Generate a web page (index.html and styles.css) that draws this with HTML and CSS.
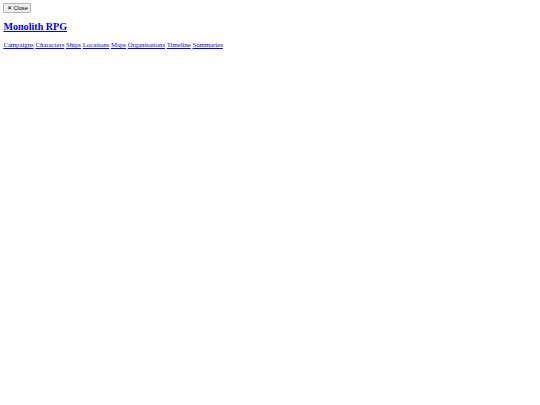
FILE: index.html
```html
<!DOCTYPE html>
<html>
<head>
<meta charset="utf-8">
<link rel="stylesheet" href="styles.css">
</head>
<body class="page">
<button class="close-btn">✕ Close</button>
<h2 class="site-title"><a href="#">Monolith RPG</a></h2>
<nav class="main-nav">
<a href="#">Campaigns</a>
<a href="#">Characters</a>
<a href="#">Ships</a>
<a href="#">Locations</a>
<a href="#">Maps</a>
<a href="#">Organisations</a>
<a href="#">Timeline</a>
<a href="#">Summaries</a>
</nav>
</body>
</html>
```
FILE: styles.css
```css
html {
  background: #ffffff;
}
.page {
  margin: 3.375px;
  font-family: "Liberation Serif", "Times New Roman", serif;
  font-size: 6.75px;
  color: #000000;
}
.close-btn {
  font-family: "Liberation Sans", Arial, sans-serif;
  font-size: 5.625px;
  line-height: 1.15;
  padding: 0.5px 2.5px;
  margin: 0;
  border: 1px solid #b4b4b4;
  border-radius: 1px;
  background: #efefef;
  color: #000000;
}
.site-title {
  font-size: 10.125px;
  font-weight: bold;
  margin: 8.4px 0;
}
.page a {
  color: #0000ee;
  text-decoration: underline;
}
.main-nav {
  display: block;
  font-size: 6.75px;
  line-height: 8px;
}
.main-nav a {
  text-decoration-thickness: 1px;
  text-underline-offset: 1px;
  text-decoration-skip-ink: none;
}
```
